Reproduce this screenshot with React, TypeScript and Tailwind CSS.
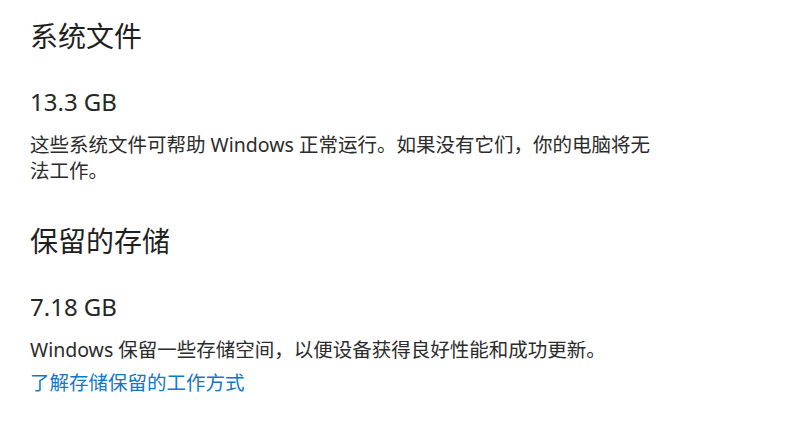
import React from 'react';

type StorageSection = {
  title: string;
  size: string;
  description: string;
  link?: string;
};

const sections: StorageSection[] = [
  {
    title: '系统文件',
    size: '13.3 GB',
    description: '这些系统文件可帮助 Windows 正常运行。如果没有它们，你的电脑将无法工作。',
  },
  {
    title: '保留的存储',
    size: '7.18 GB',
    description: 'Windows 保留一些存储空间，以便设备获得良好性能和成功更新。',
    link: '了解存储保留的工作方式',
  },
];

const App: React.FC = () => {
  return (
    <div
      className="min-h-[447px] w-[800px] bg-white pl-[30px] pt-[18px] text-[#2b2b2b]"
      style={{ fontFamily: '"Segoe UI", "Noto Sans", "Noto Sans CJK SC", sans-serif' }}
    >
      {sections.map((section, i) => (
        <div key={section.title} className={i > 0 ? 'mt-[39px]' : ''}>
          <h2 className="text-[28px] leading-[36px] font-normal text-[#1f1f1f]">{section.title}</h2>
          <div className="mt-[32px] text-[24px] leading-[32px] font-normal text-[#262626]">{section.size}</div>
          <p className="mt-[14px] w-[630px] text-[19.5px] leading-[26px]">{section.description}</p>
          {section.link && (
            <a href="#" className="mt-[7px] block text-[19.5px] leading-[26px] text-[#1377c8]">
              {section.link}
            </a>
          )}
        </div>
      ))}
    </div>
  );
};

export default App;
